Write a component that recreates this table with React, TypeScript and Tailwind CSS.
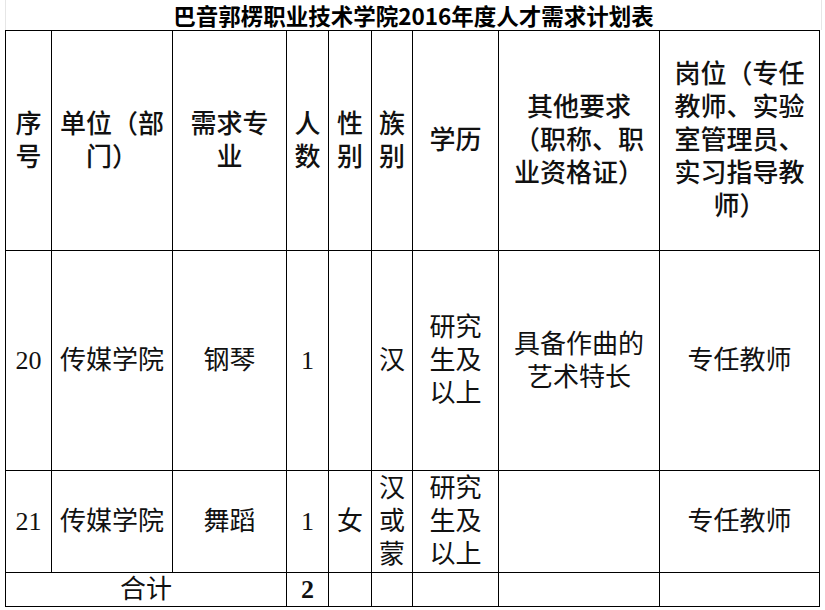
import React from "react";

type CellProps = {
  lines?: string[];
  className?: string;
};

// one table cell, every line given explicitly so the wrap matches the sheet
const Cell = ({ lines = [], className = "" }: CellProps) => {
  return (
    <div
      className={`flex flex-col items-center justify-center border-b border-r border-black text-center leading-[33px] ${className}`}
    >
      {lines.map((line, i) => (
        <span key={i} className="whitespace-nowrap">
          {line}
        </span>
      ))}
    </div>
  );
};

const header: string[][] = [
  ["序", "号"],
  ["单位（部", "门）"],
  ["需求专", "业"],
  ["人", "数"],
  ["性", "别"],
  ["族", "别"],
  ["学历"],
  ["其他要求", "（职称、职", "业资格证）"],
  ["岗位（专任", "教师、实验", "室管理员、", "实习指导教", "师）"],
];

const rows: string[][][] = [
  [
    ["20"],
    ["传媒学院"],
    ["钢琴"],
    ["1"],
    [],
    ["汉"],
    ["研究", "生及", "以上"],
    ["具备作曲的", "艺术特长"],
    ["专任教师"],
  ],
  [
    ["21"],
    ["传媒学院"],
    ["舞蹈"],
    ["1"],
    ["女"],
    ["汉", "或", "蒙"],
    ["研究", "生及", "以上"],
    [],
    ["专任教师"],
  ],
];

export default function App() {
  return (
    <div
      className="h-[610px] w-[825px] bg-white pl-[5px] text-[26px] text-[#111]"
      style={{
        fontFamily: '"Liberation Serif", "Noto Sans CJK SC", serif',
      }}
    >
      {/* title row */}
      <div
        className="flex h-[30px] w-[817px] items-center justify-center border-l border-r border-[#e6e6e6] text-[22.5px] font-bold leading-none text-black"
        style={{ fontFamily: '"Noto Sans CJK SC", "Noto Sans", sans-serif' }}
      >
        巴音郭楞职业技术学院2016年度人才需求计划表
      </div>

      <div className="grid w-[815px] grid-cols-[46px_121px_114px_42px_43px_41px_86px_161px_160px] grid-rows-[220px_220px_102px_34px] border-l border-t border-black">
        {header.map((lines, i) => (
          <Cell key={"h" + i} lines={lines} className="font-medium" />
        ))}

        {rows.map((row, r) =>
          row.map((lines, i) => <Cell key={r + "-" + i} lines={lines} />)
        )}

        {/* total row, text sits on the bottom like the sheet */}
        <Cell lines={["合计"]} className="col-span-3 !justify-end leading-[27px]" />
        <Cell lines={["2"]} className="!justify-end font-bold leading-[27px]" />
        <Cell />
        <Cell />
        <Cell />
        <Cell />
        <Cell />
      </div>
    </div>
  );
}
